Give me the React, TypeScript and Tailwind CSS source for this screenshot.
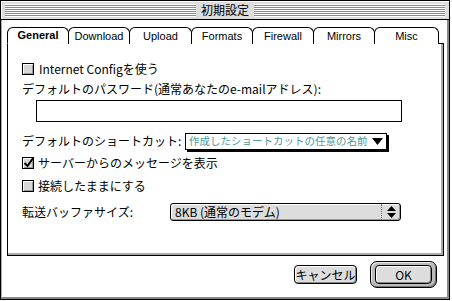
import React from "react";

const font = { fontFamily: '"Noto Sans CJK JP", "Noto Sans", sans-serif' };

function Check({ checked = false }: { checked?: boolean }) {
  return (
    <div className="relative w-[12px] h-[12px] shrink-0 border border-black bg-[#d6d6d6] shadow-[inset_1px_1px_0_#fff,inset_-1px_-1px_0_#999]">
      {checked && (
        <svg className="absolute left-[-1px] top-[-3px]" width="14" height="14" viewBox="0 0 14 14">
          <path d="M2.5 8 L5.5 11 L11.5 2.5" stroke="#000" strokeWidth="2" fill="none" />
        </svg>
      )}
    </div>
  );
}

const tabs = [
  { label: "General", w: "w-[62px]" },
  { label: "Download", w: "w-[62px]" },
  { label: "Upload", w: "w-[63px]" },
  { label: "Formats", w: "w-[62px]" },
  { label: "Firewall", w: "w-[62px]" },
  { label: "Mirrors", w: "w-[62px]" },
  { label: "Misc", w: "w-[65px]" },
];

export default function App() {
  return (
    <div className="w-[452px] h-[301px] bg-white text-black text-[12px] leading-none" style={font}>
      <div className="w-[450px] h-[300px] border border-black flex flex-col bg-white">
        {/* title bar */}
        <div className="h-[19px] shrink-0 bg-[#dddddd] border-b border-black flex items-center px-[4px] gap-[5px] shadow-[inset_1px_1px_0_#fff]">
          <div className="flex-1 h-[13px] bg-[repeating-linear-gradient(to_bottom,#ffffff_0px,#ffffff_1px,#8a8a8a_1px,#8a8a8a_2px)]" />
          <div className="text-[12px] leading-none">初期設定</div>
          <div className="flex-1 h-[13px] bg-[repeating-linear-gradient(to_bottom,#ffffff_0px,#ffffff_1px,#8a8a8a_1px,#8a8a8a_2px)]" />
        </div>
        {/* body */}
        <div className="flex-1 flex flex-col border-l border-[#aaaaaa] border-r-2 border-b-2 border-r-[#888] border-b-[#888] pl-[5px] pr-[4px] pt-[7px]">
          {/* tabs */}
          <div className="flex h-[17px] relative z-10">
            {tabs.map((t, i) => (
              <div
                key={t.label}
                className={`${t.w} h-[17px] bg-white border border-black rounded-t-[6px] flex items-center justify-center text-[11px] ${
                  i === 0 ? "border-b-white font-bold" : "border-b-0 -ml-[1px]"
                }`}
                style={{ fontFamily: '"Liberation Sans", "DejaVu Sans", sans-serif' }}
              >
                {t.label}
              </div>
            ))}
          </div>
          {/* panel */}
          <div className="w-[437px] h-[213px] -mt-[1px] border border-black shadow-[inset_-2px_-2px_0_#aaaaaa] flex flex-col pl-[14px] pt-[17px]">
            <div className="h-[16px] flex items-center gap-[5px]">
              <Check />
              <span>Internet Configを使う</span>
            </div>
            <div className="h-[16px] mt-[4px] flex items-center whitespace-nowrap">デフォルトのパスワード(通常あなたのe-mailアドレス):</div>
            <div className="ml-[14px] mt-[3px] w-[366px] h-[22px] border border-black bg-white" />
            <div className="h-[20px] mt-[9px] flex items-center">
              <span className="w-[163px] whitespace-nowrap">デフォルトのショートカット:</span>
              <div className="w-[202px] h-[17px] border border-black bg-white shadow-[2px_2px_0_#000] flex items-center pl-[3px] pr-[3px] gap-[3px] justify-between">
                <span className="text-[#4f9a9a] text-[10.5px] whitespace-nowrap">作成したショートカットの任意の名前</span>
                <svg width="11" height="7" viewBox="0 0 11 7">
                  <path d="M0 0 H11 L5.5 7 Z" fill="#000" />
                </svg>
              </div>
            </div>
            <div className="h-[16px] mt-[4px] flex items-center gap-[4px]">
              <Check checked />
              <span>サーバーからのメッセージを表示</span>
            </div>
            <div className="h-[16px] mt-[7px] flex items-center gap-[4px]">
              <Check />
              <span>接続したままにする</span>
            </div>
            <div className="h-[20px] mt-[8px] flex items-center">
              <span className="w-[148px] whitespace-nowrap">転送バッファサイズ:</span>
              <div className="w-[231px] h-[18px] rounded-[3px] border border-black bg-[#dddddd] shadow-[inset_1px_1px_0_#fff,inset_-1px_-1px_0_#999] flex items-center">
                <span className="flex-1 pl-[4px]">8KB (通常のモデム)</span>
                <div className="w-[19px] h-full border-l border-dotted border-[#666] flex items-center justify-center">
                  <svg width="9" height="12" viewBox="0 0 9 12">
                    <path d="M4.5 0 L9 5 H0 Z M0 7 H9 L4.5 12 Z" fill="#000" />
                  </svg>
                </div>
              </div>
            </div>
          </div>
          {/* buttons */}
          <div className="flex justify-end items-center mt-[5px] pr-[6px] gap-[13px]">
            <div className="w-[63px] h-[19px] rounded-[4px] border border-black bg-[#dddddd] shadow-[inset_1px_1px_0_#fff,inset_-1px_-1px_0_#888] flex items-center justify-center">
              キャンセル
            </div>
            <div className="w-[67px] h-[27px] rounded-[7px] border border-black bg-[#bbbbbb] shadow-[inset_1px_1px_0_#eee,inset_-1px_-1px_0_#777] flex items-center justify-center">
              <div className="w-[57px] h-[19px] rounded-[4px] border border-black bg-[#dddddd] shadow-[inset_1px_1px_0_#fff,inset_-1px_-1px_0_#888] flex items-center justify-center">
                OK
              </div>
            </div>
          </div>
        </div>
      </div>
    </div>
  );
}
